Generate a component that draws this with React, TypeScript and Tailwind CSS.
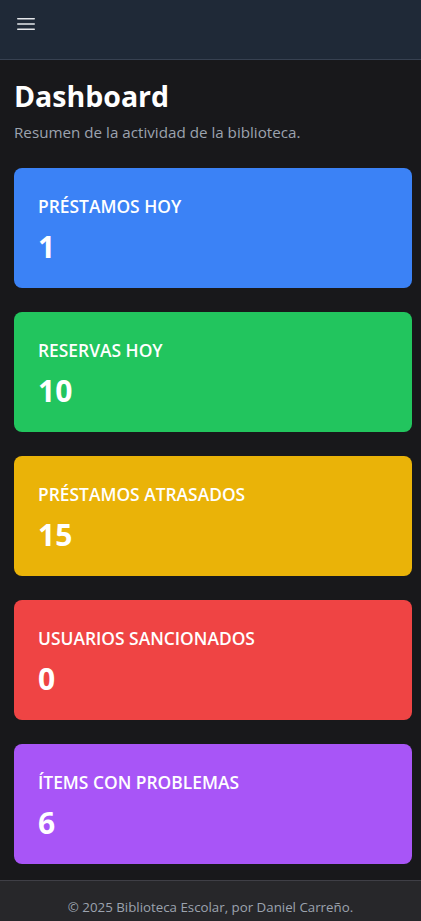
import React from "react";

const cards = [
  { label: "PRÉSTAMOS HOY", value: "1", cls: "bg-[#3b82f6]" },
  { label: "RESERVAS HOY", value: "10", cls: "bg-[#22c55e]" },
  { label: "PRÉSTAMOS ATRASADOS", value: "15", cls: "bg-[#eab308]" },
  { label: "USUARIOS SANCIONADOS", value: "0", cls: "bg-[#ef4444]" },
  { label: "ÍTEMS CON PROBLEMAS", value: "6", cls: "bg-[#a855f7]" },
];

export default function App() {
  return (
    <div
      className="min-h-screen bg-[#18181b] flex flex-col"
      style={{ fontFamily: '"Open Sans", "Noto Sans", sans-serif' }}
    >
      <header className="h-[60px] bg-[#1f2937] border-b border-[#374151] px-[14px] pt-[12px]">
        <svg width="24" height="24" viewBox="0 0 24 24" fill="none" stroke="#e5e7eb" strokeWidth="1.5" strokeLinecap="round">
          <path d="M3.75 6.75h16.5M3.75 12h16.5M3.75 17.25h16.5" />
        </svg>
      </header>
      <main className="pl-[14px] pr-[9px] pt-[18px] pb-4 flex-1">
        <h1 className="text-[28.5px] leading-[36px] font-bold text-white">Dashboard</h1>
        <p className="mt-[6px] text-[15.2px] leading-6 text-[#9ca3af]">Resumen de la actividad de la biblioteca.</p>
        <div className="mt-6 flex flex-col gap-6">
          {cards.map((c) => (
            <div key={c.label} className={`${c.cls} rounded-lg px-6 pt-6 pb-6 h-[120px]`}>
              <div className="text-[17.4px] leading-[28px] font-semibold text-white">{c.label}</div>
              <div className="mt-[9px] text-[30px] leading-[36px] font-bold text-white">{c.value}</div>
            </div>
          ))}
        </div>
      </main>
      <footer className="bg-[#27272a] border-t border-[#3f3f46] pt-4 pb-4 text-center text-[13.3px] leading-5 text-[#9ca3af]">
        © 2025 Biblioteca Escolar, por Daniel Carreño.
      </footer>
    </div>
  );
}
